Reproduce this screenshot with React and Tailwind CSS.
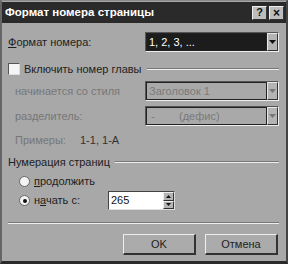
import React from "react";

const Arrow = ({ color = "#111" }) => (
  <svg width="7" height="4" viewBox="0 0 7 4"><polygon points="0,0 7,0 3.5,4" fill={color} /></svg>
);

const ArrowBtn = ({ disabled }) => (
  <div className="w-[11px] h-full bg-[#b4b4b4] border-t border-l border-t-[#e8e8e8] border-l-[#e8e8e8] border-b border-r border-b-[#333] border-r-[#333] flex items-center justify-center">
    <Arrow color={disabled ? "#777" : "#111"} />
  </div>
);

const Combo = ({ children, selected, disabled }) => (
  <div className="w-[134px] h-[20px] border-t border-l border-t-[#555] border-l-[#555] border-b border-r border-b-[#eee] border-r-[#eee] flex">
    <div className={"flex-1 flex items-center pl-[2px] border border-[#222] " + (selected ? "bg-[#1c1c1c] text-white" : "bg-[#a9a9a9] text-[#7a7a7a]")}>
      {children}
    </div>
    <ArrowBtn disabled={disabled} />
  </div>
);

const Radio = ({ checked }) => (
  <div className="w-[11px] h-[11px] rounded-full bg-[#f4f4f4] border border-[#666] flex items-center justify-center">
    {checked && <div className="w-[4px] h-[4px] rounded-full bg-[#111]" />}
  </div>
);

const Button = ({ children }) => (
  <div className="w-[73px] h-[21px] bg-[#ababab] border-t border-l border-t-[#eee] border-l-[#eee] border-b-2 border-r-2 border-b-[#333] border-r-[#333] flex items-center justify-center text-[#222]">
    {children}
  </div>
);

export default function App() {
  return (
    <div
      className="w-[288px] h-[264px] bg-[#a8a8a8] border-l-2 border-t border-l-[#666] border-t-[#888] border-r-2 border-b-[3px] border-r-[#444] border-b-[#2a2a2a] flex flex-col text-[11px] text-[#1e1e1e]"
      style={{ fontFamily: '"Liberation Sans", Arial, sans-serif' }}
    >
      <div className="h-[21px] bg-[#2a2a2a] flex items-center justify-between pl-[3px] pr-[2px] mt-[1px]">
        <span className="text-white font-bold text-[11.5px]">Формат номера страницы</span>
        <div className="flex gap-[2px]">
          <div className="w-[15px] h-[14px] bg-[#bdbdbd] border-t border-l border-[#eee] border-b border-r border-b-[#333] border-r-[#333] flex items-center justify-center text-[11px] font-bold leading-none text-[#111]">?</div>
          <div className="w-[15px] h-[14px] bg-[#bdbdbd] border-t border-l border-[#eee] border-b border-r border-b-[#333] border-r-[#333] flex items-center justify-center text-[12px] font-bold leading-none text-[#111]">×</div>
        </div>
      </div>

      <div className="flex flex-col pl-[6px] pr-[7px]">
        <div className="flex items-center justify-between mt-[9px]">
          <span><span className="underline">Ф</span>ормат номера:</span>
          <Combo selected>1, 2, 3, ...</Combo>
        </div>

        <div className="flex items-center mt-[10px] h-[14px]">
          <div className="w-[12px] h-[12px] bg-[#f5f5f5] border-t border-l border-t-[#555] border-l-[#555] border-b border-r border-b-[#ddd] border-r-[#ddd]" />
          <span className="ml-[4px] text-[#222]">Включить номер главы</span>
          <div className="flex-1 ml-[5px] h-[2px] border-t border-t-[#777] border-b border-b-[#eee]" />
        </div>

        <div className="flex items-center justify-between mt-[5px] text-[#777]">
          <span className="ml-[7px]">начинается со стиля</span>
          <Combo disabled>Заголовок 1</Combo>
        </div>

        <div className="flex items-center justify-between mt-[5px] text-[#777]">
          <span className="ml-[7px]">разделитель:</span>
          <Combo disabled><span className="w-[30px] pl-[2px]">-</span>(дефис)</Combo>
        </div>

        <div className="flex items-center mt-[8px] h-[13px]">
          <span className="ml-[7px] w-[65px] text-[#777]">Примеры:</span>
          <span className="text-[#333]">1-1, 1-А</span>
        </div>

        <div className="flex items-center mt-[8px] h-[14px]">
          <span className="text-[#222]">Нумерация страниц</span>
          <div className="flex-1 ml-[5px] h-[2px] border-t border-t-[#777] border-b border-b-[#eee]" />
        </div>

        <div className="flex items-center mt-[6px] h-[13px] pl-[11px]">
          <Radio />
          <span className="ml-[4px]"><span className="underline">п</span>родолжить</span>
        </div>

        <div className="flex items-center mt-[3px] h-[19px] pl-[11px]">
          <Radio checked />
          <span className="ml-[4px] w-[74px]">н<span className="underline">а</span>чать с:</span>
          <div className="w-[67px] h-[19px] bg-white border-t border-l border-t-[#444] border-l-[#444] border-b border-r border-b-[#ddd] border-r-[#ddd] flex items-center">
            <span className="flex-1 pl-[2px] text-[#111]">265</span>
            <div className="w-[11px] h-full flex flex-col">
              <div className="flex-1 bg-[#b4b4b4] border border-t-[#eee] border-l-[#eee] border-b-[#333] border-r-[#333] flex items-center justify-center">
                <svg width="5" height="3" viewBox="0 0 5 3"><polygon points="0,3 5,3 2.5,0" fill="#111" /></svg>
              </div>
              <div className="flex-1 bg-[#b4b4b4] border border-t-[#eee] border-l-[#eee] border-b-[#333] border-r-[#333] flex items-center justify-center">
                <svg width="5" height="3" viewBox="0 0 5 3"><polygon points="0,0 5,0 2.5,3" fill="#111" /></svg>
              </div>
            </div>
          </div>
        </div>

        <div className="mt-[12px] h-[2px] border-t border-t-[#777] border-b border-b-[#eee]" />

        <div className="flex justify-end gap-[9px] mt-[10px] pr-[1px]">
          <Button>OK</Button>
          <Button>Отмена</Button>
        </div>
      </div>
    </div>
  );
}
